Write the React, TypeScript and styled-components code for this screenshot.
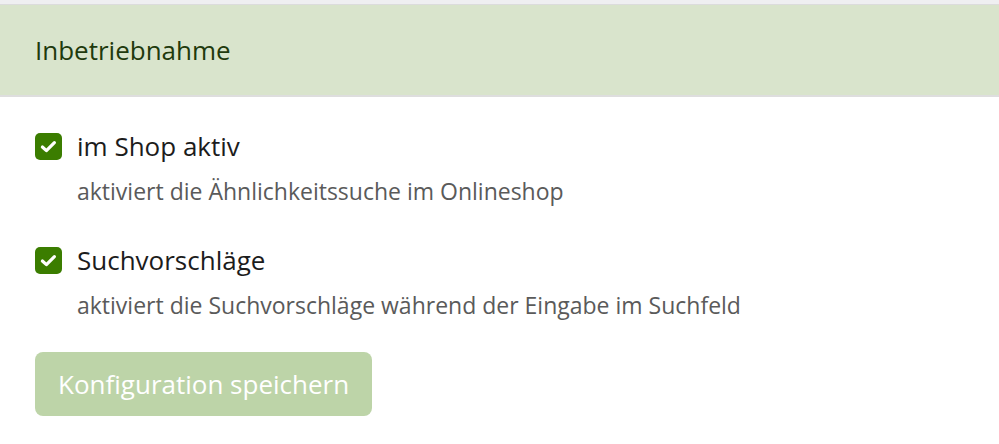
import { createGlobalStyle } from "styled-components";
import styled from "styled-components";

const GlobalStyle = createGlobalStyle`
  html, body {
    margin: 0;
    padding: 0;
    background: #ffffff;
    font-family: "Open Sans", "Noto Sans", sans-serif;
  }
`;

const Page = styled.div`
  width: 999px;
  height: 444px;
  background: #ffffff;
  border-top: 4px solid #efeff1;
  box-sizing: border-box;
  overflow: hidden;
`;

const Header = styled.div`
  height: 90px;
  display: flex;
  align-items: center;
  padding: 0 35px;
  background: #d9e4cc;
  border-top: 1px solid #dcdcdc;
  border-bottom: 2px solid #dedede;
  color: #1f3a0d;
  font-size: 26px;
`;

const Body = styled.div`
  display: flex;
  flex-direction: column;
  padding: 34px 35px 0;
`;

const OptionList = styled.div`
  display: flex;
  flex-direction: column;
  gap: 39px;
`;

const Option = styled.label`
  display: grid;
  grid-template-columns: 27px 1fr;
  column-gap: 15px;
  align-items: center;
`;

const Box = styled.span`
  width: 27px;
  height: 27px;
  border-radius: 5px;
  background: #3b7d00;
  display: flex;
  align-items: center;
  justify-content: center;
`;

const Title = styled.span`
  font-size: 26px;
  color: #1c1c1c;
  line-height: 30px;
`;

const Hint = styled.span`
  grid-column: 2;
  margin-top: 15px;
  font-size: 23px;
  color: #5a5a5a;
  line-height: 30px;
`;

const SaveButton = styled.button`
  align-self: flex-start;
  margin-top: 32px;
  height: 64px;
  padding: 0 23px;
  border: none;
  border-radius: 8px;
  background: #bdd4a8;
  color: #ffffff;
  font-family: inherit;
  font-size: 26px;
`;

const Check = () => (
  <svg width="19" height="19" viewBox="0 0 19 19">
    <path
      d="M3.4 10 L7.4 13.6 L15.4 5.6"
      fill="none"
      stroke="#ffffff"
      strokeWidth="3.2"
      strokeLinecap="round"
      strokeLinejoin="round"
    />
  </svg>
);

const options = [
  {
    title: "im Shop aktiv",
    hint: "aktiviert die Ähnlichkeitssuche im Onlineshop",
  },
  {
    title: "Suchvorschläge",
    hint: "aktiviert die Suchvorschläge während der Eingabe im Suchfeld",
  },
];

export default function App() {
  return (
    <Page>
      <GlobalStyle />
      <Header>Inbetriebnahme</Header>
      <Body>
        <OptionList>
          {options.map((option) => (
            <Option key={option.title}>
              <Box>
                <Check />
              </Box>
              <Title>{option.title}</Title>
              <Hint>{option.hint}</Hint>
            </Option>
          ))}
        </OptionList>
        <SaveButton>Konfiguration speichern</SaveButton>
      </Body>
    </Page>
  );
}
